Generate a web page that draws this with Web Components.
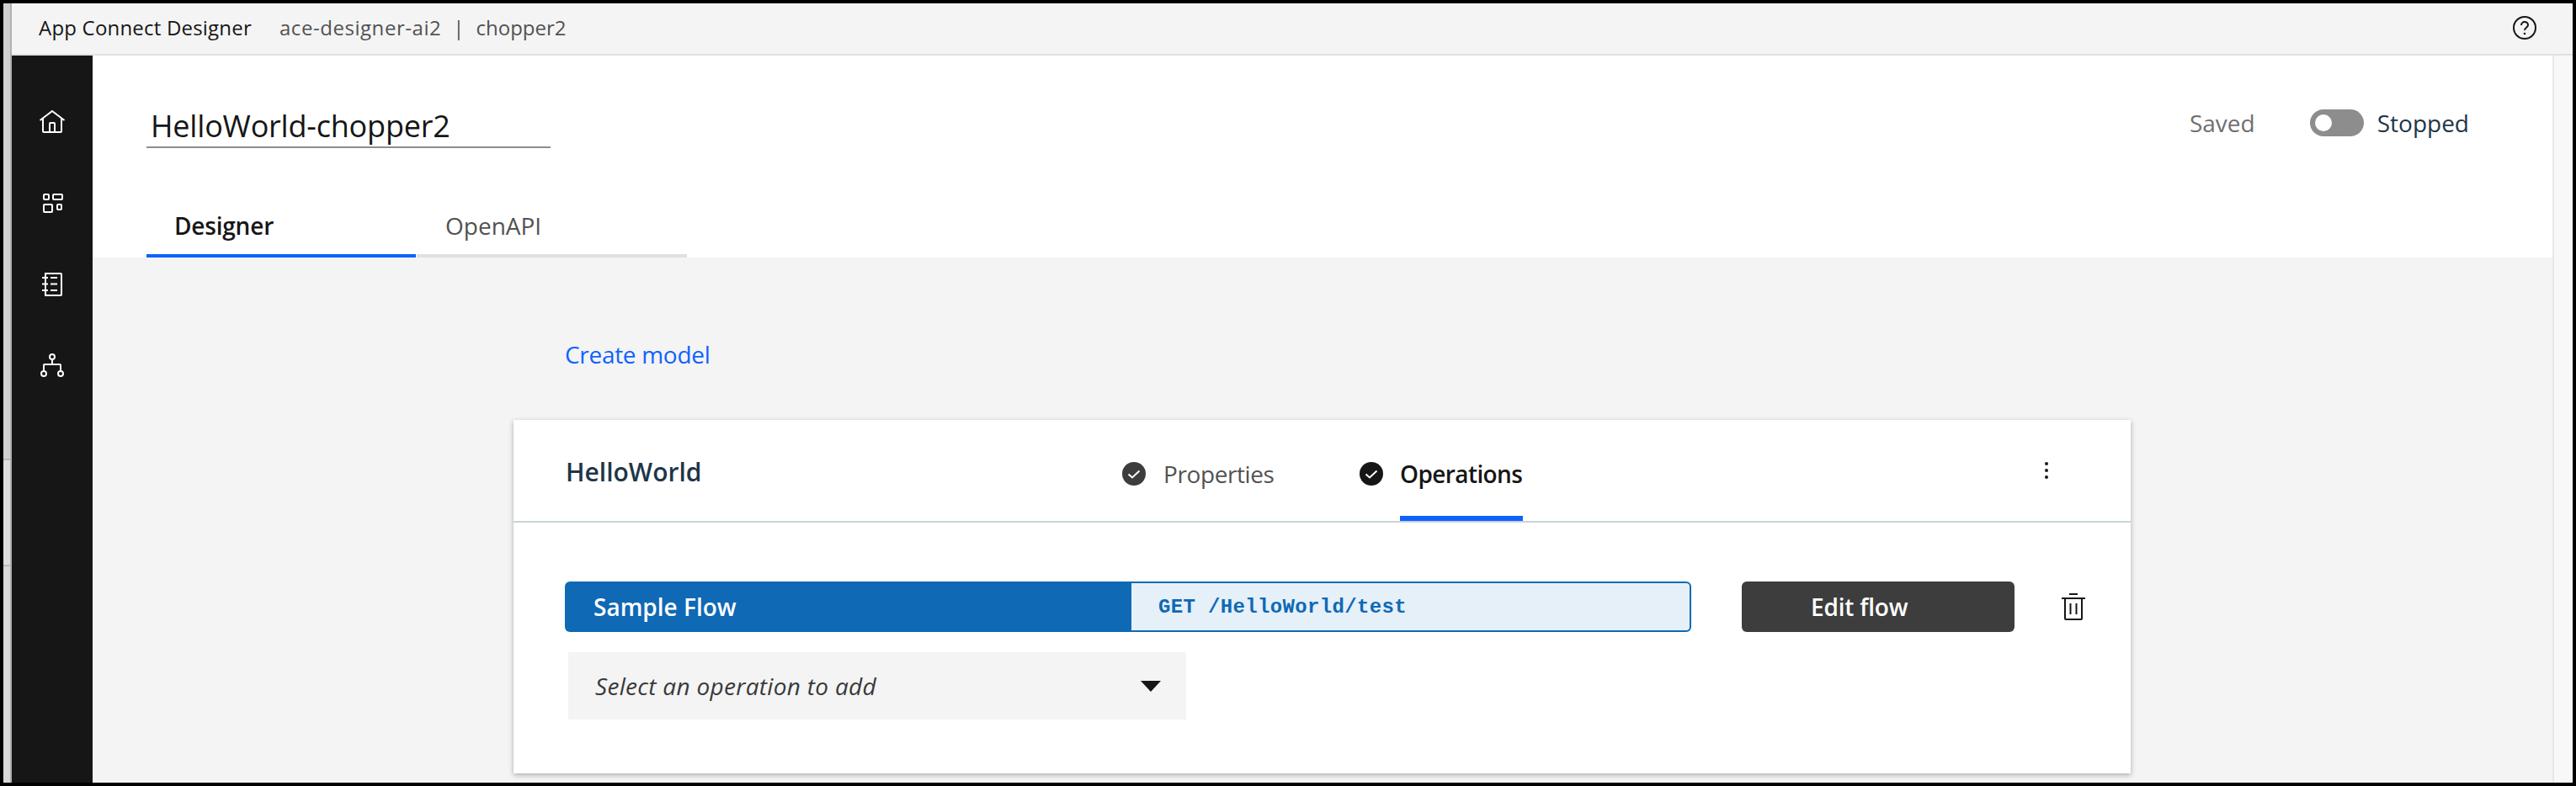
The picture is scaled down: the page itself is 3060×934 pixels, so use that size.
<!DOCTYPE html>
<html>
<head>
<meta charset="utf-8">
<title>App Connect Designer</title>
<style>
  html, body { margin: 0; height: 100%; background: #000; }
  body { font-family: "Open Sans", Roboto, sans-serif; }
</style>
</head>
<body>
<ace-app>
  <ace-topbar slot="top" product="App Connect Designer" instance="ace-designer-ai2" user="chopper2"></ace-topbar>
  <ace-sidenav slot="nav"></ace-sidenav>
  <ace-flow-header slot="head" name="HelloWorld-chopper2"></ace-flow-header>
  <ace-canvas slot="main">
    <ace-api-card name="HelloWorld">
      <ace-operation-row flow="Sample Flow" route="GET /HelloWorld/test"></ace-operation-row>
      <ace-operation-select placeholder="Select an operation to add"></ace-operation-select>
    </ace-api-card>
  </ace-canvas>
</ace-app>

<script>
  class AceApp extends HTMLElement {
    constructor() {
      super();
      this.attachShadow({ mode: 'open' });
      this.shadowRoot.innerHTML = `
        <style>
          :host {
            display: block;
            box-sizing: border-box;
            height: 934px;
            padding: 4px 4px 4px 4px;
            background: #000;
            overflow: hidden;
          }
          .window {
            display: grid;
            grid-template-columns: 10px 96px 1fr 24px;
            grid-template-rows: 62px 240px 1fr;
            grid-template-areas:
              "edge top top top"
              "edge nav head side"
              "edge nav main side";
            height: 100%;
            background: #f4f4f4;
          }
          .top { grid-area: top; }
          .edge {
            grid-area: edge;
            box-sizing: border-box;
            border-right: 2px solid #b0b0b0;
            background: linear-gradient(to bottom,
              #cfcfcf 0, #cfcfcf 541px,
              #b8b8b8 541px, #b8b8b8 543px,
              #dedede 543px, #dedede 667px,
              #bcbcbc 667px, #bcbcbc 669px,
              #d8d8d8 669px);
          }
          .nav { grid-area: nav; background: #161616; }
          .head { grid-area: head; min-width: 0; }
          .main { grid-area: main; min-width: 0; overflow: hidden; }
          .side {
            grid-area: side;
            grid-row: 2 / 4;
            box-sizing: border-box;
            background: #f8f8f8;
            border-left: 2px solid #e8e8e8;
          }
        </style>
        <div class="window">
          <div class="edge"></div>
          <div class="top"><slot name="top"></slot></div>
          <div class="nav"><slot name="nav"></slot></div>
          <div class="head"><slot name="head"></slot></div>
          <div class="main"><slot name="main"></slot></div>
          <div class="side"></div>
        </div>
      `;
    }
  }
  customElements.define('ace-app', AceApp);

  class AceTopbar extends HTMLElement {
    constructor() {
      super();
      this.attachShadow({ mode: 'open' });
      this.shadowRoot.innerHTML = `
        <style>
          :host {
            display: flex;
            align-items: center;
            box-sizing: border-box;
            height: 62px;
            padding: 0 42px 2px 32px;
            background: #f4f4f4;
            border-bottom: 2px solid #e0e0e0;
            font-size: 24px;
            line-height: 32px;
          }
          .product { color: #161616; letter-spacing: 0.2px; }
          .instance { color: #525252; margin-left: 33px; letter-spacing: 0.55px; }
          .sep { color: #525252; margin: 0 14px; }
          .user { color: #525252; }
          svg { margin-left: auto; display: block; }
        </style>
        <span class="product">${this.getAttribute('product')}</span>
        <span class="instance">${this.getAttribute('instance')}</span>
        <span class="sep">|</span>
        <span class="user">${this.getAttribute('user')}</span>
        <svg width="30" height="30" viewBox="0 0 30 30" fill="none" stroke="#161616" stroke-width="2">
          <circle cx="15" cy="15" r="13"/>
          <path d="M11 12c0-2.400 1.800-4 4-4s4 1.600 4 3.700c0 3-4 3.200-4 6.300"/>
          <circle cx="15" cy="22" r="1.300" fill="#161616" stroke="none"/>
        </svg>
      `;
    }
  }
  customElements.define('ace-topbar', AceTopbar);

  class AceSidenav extends HTMLElement {
    constructor() {
      super();
      this.attachShadow({ mode: 'open' });
      this.shadowRoot.innerHTML = `
        <style>
          :host {
            display: flex;
            flex-direction: column;
            align-items: center;
            gap: 64px;
            box-sizing: border-box;
            height: 100%;
            padding-top: 64px;
          }
          svg { display: block; fill: none; stroke: #fff; stroke-width: 2; }
        </style>
        <svg width="32" height="32" viewBox="0 0 32 32">
          <path d="M1.500 13 16 2l14.500 11"/>
          <path d="M5 10.500V26a1 1 0 0 0 1 1h20a1 1 0 0 0 1-1V10.500"/>
          <path d="M13 27V17a1 1 0 0 1 1-1h4a1 1 0 0 1 1 1v10"/>
        </svg>
        <svg width="32" height="32" viewBox="0 0 32 32">
          <rect x="6" y="5" width="6" height="6" rx="1"/>
          <rect x="17" y="5" width="11" height="6" rx="1"/>
          <rect x="6" y="17" width="10" height="9" rx="1"/>
          <rect x="22" y="17" width="5" height="6" rx="1"/>
        </svg>
        <svg width="32" height="32" viewBox="0 0 32 32">
          <path d="M8 3h18a1 1 0 0 1 1 1v24a1 1 0 0 1-1 1H8V3z"/>
          <path d="M4 8h7M4 15.500h7M4 23h7M14 8h8M14 15.500h8M14 23h8"/>
        </svg>
        <svg width="32" height="32" viewBox="0 0 32 32">
          <circle cx="16" cy="6" r="3"/>
          <circle cx="6" cy="26" r="3"/>
          <circle cx="26" cy="26" r="3"/>
          <path d="M16 9v6M6 23v-7a1 1 0 0 1 1-1h18a1 1 0 0 1 1 1v7"/>
        </svg>
      `;
    }
  }
  customElements.define('ace-sidenav', AceSidenav);

  class AceFlowHeader extends HTMLElement {
    constructor() {
      super();
      this.attachShadow({ mode: 'open' });
      this.shadowRoot.innerHTML = `
        <style>
          :host {
            display: flex;
            flex-direction: column;
            box-sizing: border-box;
            height: 240px;
            padding: 0 0 0 64px;
            background: #fff;
          }
          .row {
            display: flex;
            align-items: flex-start;
            justify-content: space-between;
            padding-top: 64px;
            height: 172px;
            box-sizing: border-box;
          }
          .name {
            box-sizing: border-box;
            width: 480px;
            height: 46px;
            padding-left: 5px;
            border-bottom: 2px solid #8d8d8d;
            font-size: 36px;
            line-height: 40px;
            letter-spacing: -0.2px;
            color: #161616;
          }
          .status {
            display: flex;
            align-items: center;
            height: 32px;
            padding-right: 99px;
            font-size: 28px;
          }
          .saved { color: #6f6f6f; margin-right: 65px; }
          .toggle {
            display: flex;
            align-items: center;
            box-sizing: border-box;
            width: 64px;
            height: 32px;
            padding-left: 6px;
            border-radius: 16px;
            background: #8d8d8d;
            margin-right: 16px;
          }
          .toggle::before {
            content: '';
            width: 20px;
            height: 20px;
            border-radius: 50%;
            background: #fff;
          }
          .state { color: #1d3649; }
          .tabs { display: flex; width: 642px; gap: 1px; }
          .tab {
            flex: 1;
            box-sizing: border-box;
            height: 68px;
            padding: 12px 0 0 33px;
            border-bottom: 4px solid #e0e0e0;
            font-size: 28px;
            line-height: 36px;
            color: #525252;
          }
          .tab.on {
            border-bottom-color: #0f62fe;
            color: #161616;
            font-weight: 600;
            letter-spacing: -0.2px;
          }
          .tab + .tab { padding-left: 34px; }
        </style>
        <div class="row">
          <div class="name">${this.getAttribute('name')}</div>
          <div class="status">
            <span class="saved">Saved</span>
            <span class="toggle"></span>
            <span class="state">Stopped</span>
          </div>
        </div>
        <div class="tabs">
          <div class="tab on">Designer</div>
          <div class="tab">OpenAPI</div>
        </div>
      `;
    }
  }
  customElements.define('ace-flow-header', AceFlowHeader);

  class AceCanvas extends HTMLElement {
    constructor() {
      super();
      this.attachShadow({ mode: 'open' });
      this.shadowRoot.innerHTML = `
        <style>
          :host {
            display: block;
            box-sizing: border-box;
            height: 100%;
            padding: 97px 0 0 500px;
          }
          a {
            display: block;
            height: 36px;
            margin: 0 0 60px 61px;
            font-size: 28px;
            line-height: 36px;
            letter-spacing: -0.3px;
            color: #0f62fe;
            text-decoration: none;
          }
        </style>
        <a href="#">Create model</a>
        <slot></slot>
      `;
    }
  }
  customElements.define('ace-canvas', AceCanvas);

  class AceApiCard extends HTMLElement {
    constructor() {
      super();
      this.attachShadow({ mode: 'open' });
      this.shadowRoot.innerHTML = `
        <style>
          :host {
            display: block;
            box-sizing: border-box;
            width: 1921px;
            height: 420px;
            background: #fff;
            box-shadow: 0 2px 6px rgba(0, 0, 0, 0.3);
          }
          .head {
            display: flex;
            align-items: center;
            box-sizing: border-box;
            height: 122px;
            padding-left: 62px;
            border-bottom: 2px solid #c8d5d7;
          }
          .name {
            width: 661px;
            padding-top: 2px;
            font-size: 30px;
            font-weight: 600;
            color: #1d3649;
          }
          .step {
            display: flex;
            align-items: center;
            gap: 21px;
            height: 120px;
            font-size: 28px;
            color: #525252;
          }
          .step + .step { margin-left: 101px; gap: 20px; color: #161616; font-weight: 600; }
          .step svg { display: block; margin-top: 8px; }
          .label {
            position: relative;
            display: flex;
            align-items: center;
            box-sizing: border-box;
            height: 100%;
            padding-top: 8px;
            width: 132px;
            letter-spacing: -0.4px;
            white-space: nowrap;
          }
          .step + .step .label { width: 146px; letter-spacing: -0.6px; }
          .step + .step .label::after {
            content: '';
            position: absolute;
            left: 0;
            right: 0;
            bottom: 0;
            height: 6px;
            background: #0f62fe;
          }
          .more { margin-left: auto; margin-right: 98px; display: flex; flex-direction: column; gap: 4px; }
          .more i { width: 4px; height: 4px; border-radius: 50%; background: #161616; display: block; }
          .body { padding: 70px 0 0 61px; }
        </style>
        <div class="head">
          <div class="name">${this.getAttribute('name')}</div>
          <div class="step">
            <svg width="28" height="28" viewBox="0 0 28 28"><circle cx="14" cy="14" r="14" fill="#3d3d3d"/><path d="M7.500 14.500l4.500 4 8.500-8" fill="none" stroke="#fff" stroke-width="2"/></svg>
            <span class="label">Properties</span>
          </div>
          <div class="step">
            <svg width="28" height="28" viewBox="0 0 28 28"><circle cx="14" cy="14" r="14" fill="#161616"/><path d="M7.500 14.500l4.500 4 8.500-8" fill="none" stroke="#fff" stroke-width="2"/></svg>
            <span class="label">Operations</span>
          </div>
          <div class="more"><i></i><i></i><i></i></div>
        </div>
        <div class="body"><slot></slot></div>
      `;
    }
  }
  customElements.define('ace-api-card', AceApiCard);

  class AceOperationRow extends HTMLElement {
    constructor() {
      super();
      this.attachShadow({ mode: 'open' });
      this.shadowRoot.innerHTML = `
        <style>
          :host { display: flex; align-items: stretch; height: 60px; }
          .flow {
            display: flex;
            align-items: center;
            box-sizing: border-box;
            width: 673px;
            padding-left: 34px;
            background: #0f69b4;
            border-radius: 6px 0 0 6px;
            color: #fff;
            font-size: 28px;
            font-weight: 600;
          }
          .route {
            display: flex;
            align-items: center;
            box-sizing: border-box;
            width: 665px;
            padding: 0 0 0 32px;
            background: #e5f0f9;
            border: 2px solid #0f69b4;
            border-left: 0;
            border-radius: 0 6px 6px 0;
            color: #0f69b4;
            font-family: "Liberation Mono", monospace;
            font-size: 24px;
            font-weight: 700;
            letter-spacing: 0.35px;
          }
          .edit {
            display: flex;
            align-items: center;
            box-sizing: border-box;
            width: 324px;
            margin-left: 60px;
            padding-left: 82px;
            background: #3d3d3d;
            border-radius: 6px;
            color: #fff;
            font-size: 28px;
            font-weight: 600;
            letter-spacing: -0.2px;
          }
          svg { display: block; margin: 14px 0 0 56px; }
        </style>
        <div class="flow">${this.getAttribute('flow')}</div>
        <div class="route">${this.getAttribute('route')}</div>
        <div class="edit">Edit flow</div>
        <svg width="28" height="32" viewBox="0 0 28 32" fill="none" stroke="#161616" stroke-width="2">
          <path d="M9 1h10M0 6h28"/>
          <path d="M4 6v24a1 1 0 0 0 1 1h18a1 1 0 0 0 1-1V6"/>
          <path d="M10.500 12v13M17.500 12v13"/>
        </svg>
      `;
    }
  }
  customElements.define('ace-operation-row', AceOperationRow);

  class AceOperationSelect extends HTMLElement {
    constructor() {
      super();
      this.attachShadow({ mode: 'open' });
      this.shadowRoot.innerHTML = `
        <style>
          :host {
            display: flex;
            align-items: center;
            justify-content: space-between;
            box-sizing: border-box;
            width: 734px;
            height: 80px;
            margin: 24px 0 0 4px;
            padding: 0 30px 0 32px;
            background: #f4f4f4;
            font-size: 28px;
            font-style: italic;
            letter-spacing: 0.3px;
            color: #393939;
          }
          .arrow {
            width: 0;
            height: 0;
            border-left: 12.500px solid transparent;
            border-right: 12.500px solid transparent;
            border-top: 13px solid #161616;
          }
        </style>
        <span>${this.getAttribute('placeholder')}</span>
        <span class="arrow"></span>
      `;
    }
  }
  customElements.define('ace-operation-select', AceOperationSelect);
</script>
</body>
</html>
